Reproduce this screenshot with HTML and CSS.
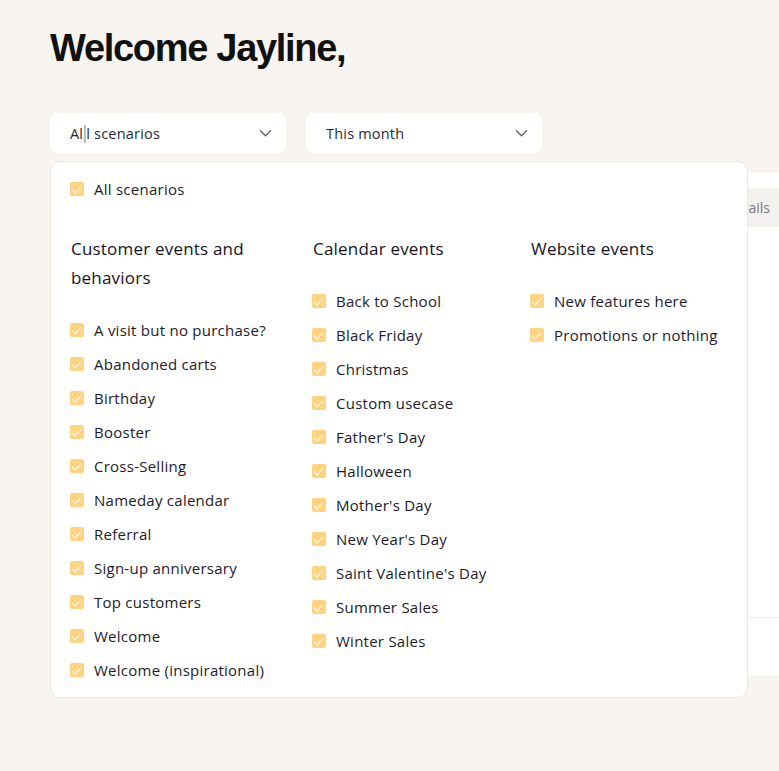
FILE: index.html
```html
<!DOCTYPE html>
<html lang="en">
<head>
  <meta charset="UTF-8" />
  <title>Dashboard</title>
  <meta name="viewport" content="width=device-width, initial-scale=1.0" />
  <link rel="stylesheet" href="styles.css">
</head>
<body>
  <main class="page">
    <h1 class="welcome">Welcome Jayline,</h1>

    <div class="filters">
      <div class="select">
        <span>Al<i class="caret"></i>l scenarios</span>
        <svg class="chevron" viewBox="0 0 14 8"><path d="M1 1l6 6 6-6" /></svg>
      </div>
      <div class="select">
        <span>This month</span>
        <svg class="chevron" viewBox="0 0 14 8"><path d="M1 1l6 6 6-6" /></svg>
      </div>
    </div>

    <div class="board">
      <section class="card">
        <div class="card-head">
          <button class="details-btn">Details</button>
        </div>
        <div class="card-body"></div>
        <div class="card-foot"></div>
      </section>

      <!-- scenarios dropdown, open over the card -->
      <div class="dropdown">
        <label class="check all"><span class="box"></span>All scenarios</label>

        <div class="groups">
          <div class="group g1">
            <h3>Customer events and behaviors</h3>
            <label class="check"><span class="box"></span>A visit but no purchase?</label>
            <label class="check"><span class="box"></span>Abandoned carts</label>
            <label class="check"><span class="box"></span>Birthday</label>
            <label class="check"><span class="box"></span>Booster</label>
            <label class="check"><span class="box"></span>Cross-Selling</label>
            <label class="check"><span class="box"></span>Nameday calendar</label>
            <label class="check"><span class="box"></span>Referral</label>
            <label class="check"><span class="box"></span>Sign-up anniversary</label>
            <label class="check"><span class="box"></span>Top customers</label>
            <label class="check"><span class="box"></span>Welcome</label>
            <label class="check"><span class="box"></span>Welcome (inspirational)</label>
          </div>
          <div class="group g2">
            <h3>Calendar events</h3>
            <label class="check"><span class="box"></span>Back to School</label>
            <label class="check"><span class="box"></span>Black Friday</label>
            <label class="check"><span class="box"></span>Christmas</label>
            <label class="check"><span class="box"></span>Custom usecase</label>
            <label class="check"><span class="box"></span>Father's Day</label>
            <label class="check"><span class="box"></span>Halloween</label>
            <label class="check"><span class="box"></span>Mother's Day</label>
            <label class="check"><span class="box"></span>New Year's Day</label>
            <label class="check"><span class="box"></span>Saint Valentine's Day</label>
            <label class="check"><span class="box"></span>Summer Sales</label>
            <label class="check"><span class="box"></span>Winter Sales</label>
          </div>
          <div class="group g3">
            <h3>Website events</h3>
            <label class="check"><span class="box"></span>New features here</label>
            <label class="check"><span class="box"></span>Promotions or nothing</label>
          </div>
        </div>
      </div>
    </div>
  </main>
</body>
</html>
```

FILE: styles.css
```css
* { box-sizing: border-box; }
html, body { overflow: hidden; }
body {
  margin: 0;
  background-color: #f8f5f1;
  font-family: 'Open Sans', 'Noto Sans', sans-serif;
  color: #1d1a2b;
  height: 771px;
}
.page { padding: 25px 0 0 50px; width: 790px; }

.welcome {
  margin: 0;
  font-family: 'Liberation Sans', Arial, sans-serif;
  font-size: 38px;
  line-height: 46px;
  font-weight: bold;
  letter-spacing: -1.3px;
  color: #111;
}

.filters { display: flex; gap: 20px; margin-top: 42px; }
.select {
  width: 236px; height: 40px; background: #fff; border-radius: 8px;
  display: flex; align-items: center; justify-content: space-between;
  padding: 0 14px 0 20px; font-size: 14.5px; letter-spacing: 0.2px; color: #2a2838;
}
.caret {
  display: inline-block; width: 2px; height: 18px; background: #bdbdbd;
  vertical-align: -4px; margin: 0 0 0 1px;
}
.chevron { width: 13px; height: 8px; }
.chevron path { fill: none; stroke: #66636e; stroke-width: 1.4; }

.board { position: relative; margin-top: 20px; }
.card {
  background: #fff; border-radius: 10px; height: 502px;
  display: flex; flex-direction: column; width: 740px;
}
.card-head { display: flex; justify-content: flex-end; padding: 15px 0 0; }
.details-btn {
  background: #f3f1ee; border: none; height: 39px; width: 110px;
  font-family: inherit; font-size: 14px; color: #7a7780; text-align: right;
  padding-right: 20px;
}
.card-body { flex: 1; }
.card-foot { height: 58px; border-top: 1px solid #eeebe7; }

.dropdown {
  position: absolute; top: -12px; left: 0; width: 698px; height: 537px;
  background: #fff; border: 1px solid #ebe6e1; border-radius: 10px;
  padding: 18px 19px;
}
.check {
  display: flex; align-items: center; gap: 10px;
  font-size: 15px; letter-spacing: 0.25px; height: 18px; color: #1d1a2b;
}
.box {
  width: 14px; height: 14px; border-radius: 2px; background: #ffd380;
  position: relative; flex-shrink: 0;
}
.box::after {
  content: ""; position: absolute; left: 4px; top: 1.5px; width: 4px; height: 8px;
  border: solid #fff; border-width: 0 1.6px 1.6px 0; transform: rotate(45deg);
}
.groups { display: grid; grid-template-columns: 222px 198px 1fr; gap: 20px; margin-top: 36px; }
.group { display: flex; flex-direction: column; gap: 16px; }
.group h3 {
  margin: 0 0 13px 1px; font-size: 17px; letter-spacing: 0.2px; font-weight: 500;
  line-height: 29px; color: #15131f;
}
```
